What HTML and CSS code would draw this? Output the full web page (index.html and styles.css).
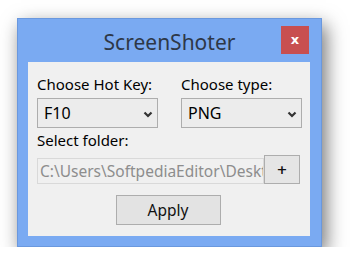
FILE: index.html
```html
<!DOCTYPE html>
<html lang="en">
<head>
    <meta charset="UTF-8">
    <meta name="viewport" content="width=device-width, initial-scale=1.0">
    <title>ScreenShoter</title>
    <link rel="stylesheet" href="styles.css">
</head>
<body>
    <div class="window">
        <div class="titlebar">
            <span class="title">ScreenShoter</span>
            <button class="close">x</button>
        </div>
        <div class="client">
            <div class="row">
                <div class="field">
                    <label>Choose Hot Key:</label>
                    <div class="combo">
                        <span>F10</span>
                        <svg width="10" height="7" viewBox="0 0 10 7"><path d="M1.5 1.5 L5 5 L8.5 1.5" fill="none" stroke="#333" stroke-width="2.2"/></svg>
                    </div>
                </div>
                <div class="field">
                    <label>Choose type:</label>
                    <div class="combo">
                        <span>PNG</span>
                        <svg width="10" height="7" viewBox="0 0 10 7"><path d="M1.5 1.5 L5 5 L8.5 1.5" fill="none" stroke="#333" stroke-width="2.2"/></svg>
                    </div>
                </div>
            </div>
            <label class="folder-label">Select folder:</label>
            <div class="folder-row">
                <div class="textbox">C:\Users\SoftpediaEditor\Desktop</div>
                <button class="plus">+</button>
            </div>
            <button class="apply">Apply</button>
        </div>
    </div>
</body>
</html>
```

FILE: styles.css
```css
body { margin: 0; padding: 18px 0 0 17px; background: #fff; font-family: 'Noto Sans', 'Open Sans', sans-serif; }
.window { width: 303px; height: 227px; background: #7aaaf2; border: 1px solid #6a98de; box-shadow: 4px 7px 18px rgba(0, 0, 0, 0.55); display: flex; flex-direction: column; }
.titlebar { height: 43px; display: grid; grid-template-columns: 1fr auto 1fr; align-items: start; }
.title { grid-column: 2; font-size: 21px; color: #2e3848; margin-top: 10px; line-height: 26px; }
.close { grid-column: 3; justify-self: end; margin: 7px 12px 0 0; width: 28px; height: 28px; border: none; background: #c84f50; color: #fff; font-family: 'DejaVu Sans', sans-serif; font-weight: bold; font-size: 13px; padding: 0 0 2px 0; }
.client { margin: 0 11px 0 10px; height: 174px; background: #f0f0f0; box-sizing: border-box; padding: 12px 8px 0 9px; display: flex; flex-direction: column; }
.row { display: flex; gap: 23px; }
.field { display: flex; flex-direction: column; width: 121px; }
label { font-size: 15px; line-height: 20px; color: #000; display: block; }
.combo { margin-top: 4px; height: 30px; box-sizing: border-box; border: 1px solid #adadad; background: #ececec; display: flex; align-items: center; justify-content: space-between; padding: 0 4px 0 6px; font-size: 16px; color: #000; }
.combo svg { margin-top: 2px; }
.folder-label { margin-top: 2px; }
.folder-row { display: flex; align-items: flex-end; margin-top: 5px; height: 29px; }
.textbox { width: 227px; height: 26px; box-sizing: border-box; border: 1px solid #d9d9d9; background: #f0f0f0; color: #8d8d8d; font-size: 15.5px; line-height: 24px; padding-left: 2px; white-space: nowrap; overflow: hidden; }
.plus { width: 36px; height: 29px; border: 1px solid #adadad; background: #e5e5e5; font-family: 'DejaVu Sans', sans-serif; font-weight: bold; font-size: 13px; color: #111; padding: 0; }
.apply { align-self: center; margin: 11px 0 0 -3px; width: 105px; height: 30px; border: 1px solid #adadad; background: #e3e3e3; font-family: 'Noto Sans', sans-serif; font-size: 15.5px; color: #111; padding: 0; }
```
